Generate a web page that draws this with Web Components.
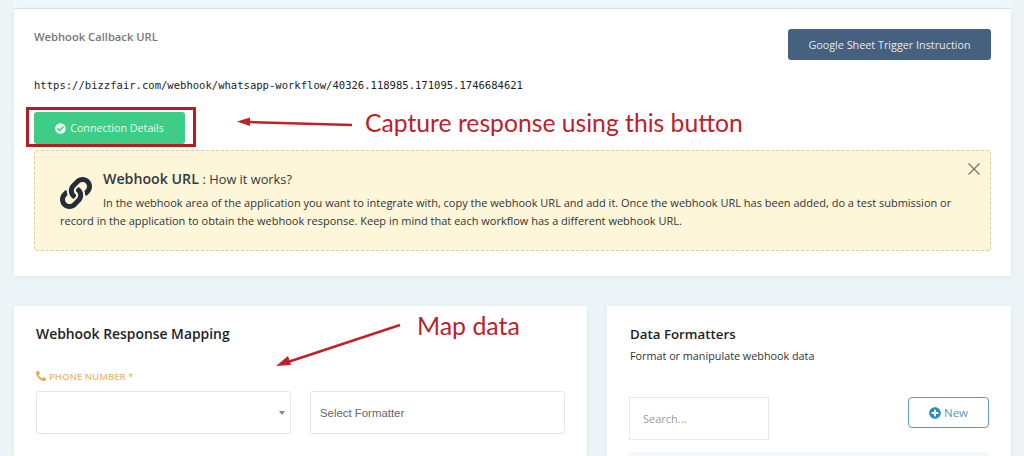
<!DOCTYPE html>
<html>
<head>
<meta charset="utf-8">
<title>Webhook</title>
<style>
    html, body { margin: 0; height: 456px; overflow: hidden; }
    body { background: #edf5f8; font-family: "Open Sans", "Noto Sans", sans-serif; color: #333; }
</style>
</head>
<body>
<workflow-page>
    <callback-card url="https://bizzfair.com/webhook/whatsapp-workflow/40326.118985.171095.1746684621">
        <howto-alert></howto-alert>
    </callback-card>
    <mapping-card slot="left"></mapping-card>
    <formatter-card slot="right"></formatter-card>
    <red-note slot="notes" kind="capture">Capture response using this button</red-note>
    <red-note slot="notes" kind="map">Map data</red-note>
</workflow-page>

<script>
const ICONS = {
    check: "M504 256c0 136.967-111.033 248-248 248S8 392.967 8 256 119.033 8 256 8s248 111.033 248 248zM227.314 387.314l184-184c6.248-6.248 6.248-16.379 0-22.627l-22.627-22.627c-6.248-6.249-16.379-6.249-22.628 0L216 308.118l-70.059-70.059c-6.248-6.248-16.379-6.248-22.628 0l-22.627 22.627c-6.248 6.248-6.248 16.379 0 22.627l104 104c6.249 6.25 16.379 6.25 22.628.001z",
    plus: "M256 8C119 8 8 119 8 256s111 248 248 248 248-111 248-248S393 8 256 8zm144 276c0 6.6-5.4 12-12 12h-92v92c0 6.6-5.4 12-12 12h-56c-6.6 0-12-5.4-12-12v-92h-92c-6.6 0-12-5.4-12-12v-56c0-6.6 5.4-12 12-12h92v-92c0-6.6 5.4-12 12-12h56c6.6 0 12 5.4 12 12v92h92c6.6 0 12 5.4 12 12v56z",
    phone: "M493.4 24.6l-104-24c-11.3-2.6-22.9 3.3-27.5 13.9l-48 112c-4.2 9.8-1.4 21.3 6.9 28l60.6 49.6c-36 76.7-98.9 140.5-177.2 177.2l-49.6-60.6c-6.8-8.3-18.2-11.1-28-6.9l-112 48C3.9 366.5-2 378.1.6 389.4l24 104C27.1 504.2 36.7 512 48 512c256.1 0 464-207.5 464-464 0-11.2-7.7-20.9-18.6-23.4z",
    link: "M326.612 185.391c59.747 59.809 58.927 155.698.36 214.59-.11.12-.24.25-.36.37l-67.2 67.2c-59.27 59.27-155.699 59.262-214.96 0-59.27-59.26-59.27-155.7 0-214.96l37.106-37.106c9.84-9.84 26.786-3.3 27.294 10.606.648 17.722 3.826 35.527 9.69 52.721 1.986 5.822.567 12.262-3.783 16.612l-13.087 13.087c-28.026 28.026-28.905 73.66-1.155 101.96 28.024 28.579 74.086 28.749 102.325.51l67.2-67.19c28.191-28.191 28.073-73.757 0-101.83-3.701-3.694-7.429-6.564-10.341-8.569a16.037 16.037 0 0 1-6.947-12.606c-.396-10.567 3.348-21.456 11.698-29.806l21.054-21.055c5.521-5.521 14.182-6.199 20.584-1.731a152.482 152.482 0 0 1 20.522 17.197zM467.547 44.449c-59.261-59.262-155.69-59.27-214.96 0l-67.2 67.2c-.12.12-.25.25-.36.37-58.566 58.892-59.387 154.781.36 214.59a152.454 152.454 0 0 0 20.521 17.196c6.402 4.468 15.064 3.789 20.584-1.731l21.054-21.055c8.35-8.35 12.094-19.239 11.698-29.806a16.037 16.037 0 0 0-6.947-12.606c-2.912-2.005-6.64-4.875-10.341-8.569-28.073-28.073-28.191-73.639 0-101.83l67.2-67.19c28.239-28.239 74.3-28.069 102.325.51 27.75 28.3 26.872 73.934-1.155 101.96l-13.087 13.087c-4.35 4.35-5.769 10.79-3.783 16.612 5.864 17.194 9.042 34.999 9.69 52.721.509 13.906 17.454 20.446 27.294 10.606l37.106-37.106c59.271-59.259 59.271-155.699.001-214.959z"
};

function icon(name, size, color, extra) {
    return `<svg viewBox="0 0 512 512" width="${size}" height="${size}" fill="${color}" style="flex:none;${extra || ""}"><path d="${ICONS[name]}"/></svg>`;
}

class WorkflowPage extends HTMLElement {
    constructor() {
        super();
        this.attachShadow({ mode: "open" });
        this.shadowRoot.innerHTML = `
            <style>
                :host { display: block; position: relative; height: 456px; overflow: hidden; }
                .strip { height: 8px; background: #eff9fc; border-bottom: 1px solid #d9e9ee; margin: 0 13px 0 14px; }
                .wrap { padding: 0 13px 0 14px; }
                .row { display: flex; gap: 20px; margin-top: 30px; }
                ::slotted([slot="left"]) { width: 573px; }
                ::slotted([slot="right"]) { width: 404px; }
            </style>
            <div class="strip"></div>
            <div class="wrap">
                <slot></slot>
                <div class="row">
                    <slot name="left"></slot>
                    <slot name="right"></slot>
                </div>
            </div>
            <slot name="notes"></slot>
        `;
    }
}

class CallbackCard extends HTMLElement {
    constructor() {
        super();
        this.attachShadow({ mode: "open" });
        this.shadowRoot.innerHTML = `
            <style>
                :host { display: block; height: 267px; box-sizing: border-box; padding: 20px 20px 0; background: #fff; box-shadow: 0 1px 6px rgba(90,120,140,.1); }
                .top { display: flex; justify-content: space-between; align-items: flex-start; height: 46px; }
                .label { font-size: 11.2px; font-weight: 600; color: #777; line-height: 15px; }
                .sheet { width: 203px; height: 31px; box-sizing: border-box; background: #46607f; color: #e4e9ef; border-radius: 3px; font-size: 10.8px; font-weight: 500; display: flex; align-items: center; justify-content: center; }
                .url { font: 10.55px/14px "DejaVu Sans Mono", "Liberation Mono", monospace; color: #222; height: 17px; margin-top: 3px; }
                .connect { width: 151px; height: 32px; margin: 17px 0 6px; background: #3dcd87; color: #e8f8ef; border-radius: 3px; font-size: 10.7px; display: flex; align-items: center; justify-content: center; gap: 4px; }
            </style>
            <div class="top">
                <div class="label">Webhook Callback URL</div>
                <div class="sheet">Google Sheet Trigger Instruction</div>
            </div>
            <div class="url"></div>
            <div class="connect">${icon("check", 11, "#eafaf1")}<span>Connection Details</span></div>
            <slot></slot>
        `;
        this.shadowRoot.querySelector(".url").textContent = this.getAttribute("url");
    }
}

class HowtoAlert extends HTMLElement {
    constructor() {
        super();
        this.attachShadow({ mode: "open" });
        this.shadowRoot.innerHTML = `
            <style>
                :host { display: block; position: relative; height: 101px; box-sizing: border-box; padding: 18px 38px 0 25px; background: #fdf6d9; border: 1px dashed #d6cf9e; border-radius: 2px; color: #333; }
                .icon { float: left; width: 32px; height: 32px; margin: 8px 11px 0 0; }
                h3 { margin: 0 0 5px; font-size: 14.2px; line-height: 19px; font-weight: 600; color: #2f3a40; }
                h3 small { font-size: 12.8px; font-weight: 500; }
                p { margin: 0; font-size: 11px; line-height: 18px; color: #333; }
                .close { position: absolute; right: 10px; top: 12px; }
            </style>
            <div class="icon">${icon("link", 32, "#242e36")}</div>
            <h3>Webhook URL <small>: How it works?</small></h3>
            <p>In the webhook area of the application you want to integrate with, copy the webhook URL and add it. Once the webhook URL has been added, do a test submission or<br>record in the application to obtain the webhook response. Keep in mind that each workflow has a different webhook URL.</p>
            <svg class="close" width="12" height="12" viewBox="0 0 12 12" stroke="#77776a" stroke-width="1.3" fill="none"><path d="M.5.5l11 11M11.5.5l-11 11"/></svg>
        `;
    }
}

class MappingCard extends HTMLElement {
    constructor() {
        super();
        this.attachShadow({ mode: "open" });
        this.shadowRoot.innerHTML = `
            <style>
                :host { display: block; height: 150px; box-sizing: border-box; padding: 18px 22px 0; background: #fff; box-shadow: 0 1px 6px rgba(90,120,140,.1); }
                h3 { margin: 0; font-size: 13.9px; line-height: 20px; font-weight: 600; color: #1e1e1e; }
                .field { display: flex; align-items: center; gap: 3px; margin-top: 25px; height: 14px; font-size: 9.5px; font-weight: 600; color: #e8bb76; }
                .inputs { display: flex; gap: 19px; margin-top: 8px; }
                .box { height: 43px; box-sizing: border-box; border: 1px solid #e2e6ea; border-radius: 3px; background: #fff; display: flex; align-items: center; }
                .select { width: 255px; justify-content: flex-end; padding-right: 5px; }
                .caret { width: 0; height: 0; border: 3px solid transparent; border-top: 4px solid #888; border-bottom: 0; }
                .formatter { width: 255px; padding-left: 9px; font: 11.4px "Liberation Sans", sans-serif; color: #666; }
            </style>
            <h3>Webhook Response Mapping</h3>
            <div class="field">${icon("phone", 10, "#e5a95b", "transform:scaleX(-1)")}<span>PHONE NUMBER *</span></div>
            <div class="inputs">
                <div class="box select"><span class="caret"></span></div>
                <div class="box formatter">Select Formatter</div>
            </div>
        `;
    }
}

class FormatterCard extends HTMLElement {
    constructor() {
        super();
        this.attachShadow({ mode: "open" });
        this.shadowRoot.innerHTML = `
            <style>
                :host { display: block; height: 150px; box-sizing: border-box; padding: 18px 22px 0 22px; background: #fff; box-shadow: 0 1px 6px rgba(90,120,140,.1); }
                h3 { margin: 0 0 0 1px; font-size: 13.3px; line-height: 20px; font-weight: 600; color: #1e1e1e; }
                p { margin: 4px 0 0 1px; font-size: 10.8px; line-height: 16px; color: #333; }
                .tools { display: flex; justify-content: space-between; align-items: flex-start; margin-top: 33px; }
                .search { width: 140px; height: 43px; box-sizing: border-box; border: 1px solid #e6e9ec; padding-left: 13px; display: flex; align-items: center; font-size: 11px; color: #999; }
                .new { width: 81px; height: 31px; box-sizing: border-box; border: 1px solid #5d9bb5; border-radius: 4px; display: flex; align-items: center; justify-content: center; gap: 3px; font-size: 11.5px; color: #5a9ab8; }
                .list { height: 10px; margin-top: 12px; background: #f5f7f8; }
            </style>
            <h3>Data Formatters</h3>
            <p>Format or manipulate webhook data</p>
            <div class="tools">
                <div class="search">Search...</div>
                <div class="new">${icon("plus", 12, "#2e8bc0")}<span>New</span></div>
            </div>
            <div class="list"></div>
        `;
    }
}

// the red marks drawn over the screenshot, each one sits on the free canvas
class RedNote extends HTMLElement {
    constructor() {
        super();
        this.attachShadow({ mode: "open" });
        const capture = this.getAttribute("kind") === "capture";
        this.shadowRoot.innerHTML = `
            <style>
                :host { position: absolute; left: 0; top: 0; width: 1024px; height: 456px; display: block; pointer-events: none; }
                .text { position: absolute; font-family: Lato, "Open Sans", sans-serif; color: #b8232b; white-space: nowrap; line-height: 30px; }
                .capture { left: 365px; top: 108px; font-size: 24.7px; }
                .map { left: 417px; top: 310px; font-size: 24.9px; }
                .frame { position: absolute; left: 26px; top: 107px; width: 170px; height: 40px; box-sizing: border-box; border: 3px solid #b71c25; }
                svg { position: absolute; left: 0; top: 0; }
            </style>
            ${capture ? '<div class="frame"></div>' : ""}
            <div class="text ${capture ? "capture" : "map"}"><slot></slot></div>
            <svg width="1024" height="456" fill="#c0222a" stroke="#c0222a">
                ${capture
                    ? '<path d="M248 122L352 125" stroke-width="2.5"/><path d="M237 121.5L250 117.5L250 126Z" stroke="none"/>'
                    : '<path d="M288 362L400 325" stroke-width="2.5"/><path d="M276 366L288 356L291 365Z" stroke="none"/>'}
            </svg>
        `;
    }
}

customElements.define("workflow-page", WorkflowPage);
customElements.define("callback-card", CallbackCard);
customElements.define("howto-alert", HowtoAlert);
customElements.define("mapping-card", MappingCard);
customElements.define("formatter-card", FormatterCard);
customElements.define("red-note", RedNote);
</script>
</body>
</html>
